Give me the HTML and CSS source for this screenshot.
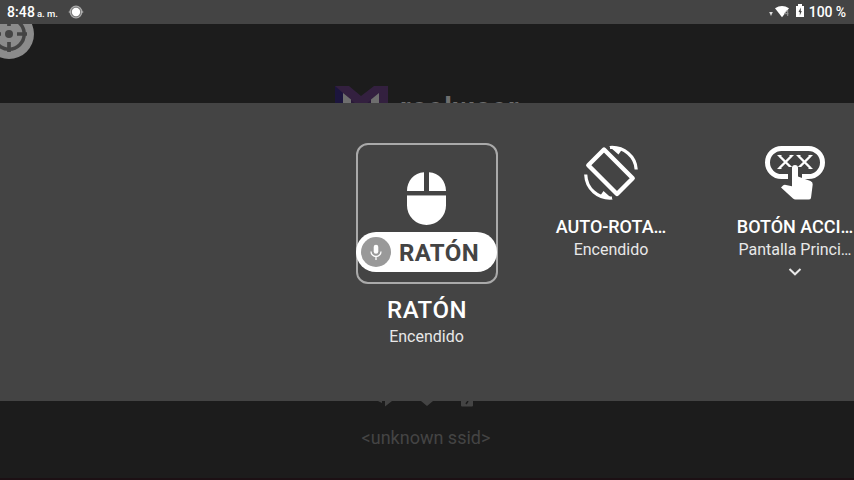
FILE: index.html
```html
<!DOCTYPE html>
<html lang="es">
<head>
<meta charset="utf-8">
<title>Controles</title>
<link rel="stylesheet" href="styles.css">
</head>
<body>
<header class="status">
  <span class="time">8:48</span><span class="ampm">a. m.</span>
  <svg class="capture" width="16" height="16" viewBox="0 0 16 16"><circle cx="8" cy="8" r="5.800" fill="#777" stroke="#aaa" stroke-width="1.300"/><path d="M0.7 8H3M13 8h2.300" stroke="#bbb" stroke-width="1.200"/><circle cx="8" cy="8" r="4.200" fill="#fff"/></svg>
  <div class="system">
    <svg width="36" height="16" viewBox="0 0 36 16"><path d="M.2 8h3.600L2 12z" fill="#ddd"/><path d="M6 4.200Q13 -.4 20 4.200L13 13.200z" fill="#fff"/><path d="M18.700 6v6M15.400 9.700h4M18.500 6l-3 3.500" fill="none" stroke="#999" stroke-width="1"/><path d="M29 0h4v2h2v11h-8V2h2z" fill="#fff"/><path d="M31.800 3.500L29.500 8h1.300v3.500l2-4.500h-1z" fill="#444"/></svg>
    <span class="percent">100 %</span>
  </div>
</header>
<section class="home-top">
  <svg class="target" width="50" height="50" viewBox="0 0 50 50"><circle cx="25" cy="25" r="25" fill="#8b8b8b"/><circle cx="25" cy="25" r="15.200" fill="none" stroke="#444" stroke-width="3.500"/><circle cx="25" cy="25" r="4" fill="#444"/><path d="M25 7v10M25 33v10M7 25h10M33 25h10" stroke="#444" stroke-width="3.700"/></svg>
  <div class="brand">
    <svg width="53" height="40" viewBox="0 0 53 40"><path d="M0 0h14l12 10L39 0h14v40H0z" fill="#33203f"/><path d="M0 0l8 7v33H0z" fill="#1c153d"/><path d="M8 7l8 6.500V40H8zM44 7l-8 6.500V40h8z" fill="#6e6e6e"/><path d="M16 14l10 8 10-8v26H16z" fill="#291938"/></svg>
    <span class="brand-name">realwear</span>
  </div>
</section>
<main class="panel">
  <article class="tile selected">
    <div class="focus">
      <svg class="mouse" width="40" height="54" viewBox="0 0 40 54"><path d="M17 .3V19H0C0 9 7 1 17 .3zM22 .3V19h17C39 9 32 1 22 .3zM0 24h39v9.500a19.500 19.500 0 0 1-39 0z" fill="#fff"/><path d="M0 23.500h39" stroke="#aaa" stroke-width="1"/></svg>
      <div class="voice">
        <span class="mic"><svg width="12" height="16" viewBox="0 0 12 16"><rect x="3.700" y=".8" width="4.600" height="9" rx="2.300" fill="#fff"/><path d="M1 7.500a5 5 0 0 0 10 0M6 12.500V16" fill="none" stroke="#fff" stroke-width="1.300"/></svg></span>
        <span class="command">RATÓN</span>
      </div>
    </div>
    <h2>RATÓN</h2>
    <p>Encendido</p>
  </article>
  <article class="tile">
    <svg class="icon" width="60" height="56" viewBox="0 0 60 56"><path d="M23 4.500L7.300 20.200 36 49 51.700 33.300z" fill="none" stroke="#fff" stroke-width="4.400" stroke-linejoin="round"/><path d="M29 2.500C43 1.500 54.500 11.500 55.200 24.500M31 53C17 54 5.300 44 4.700 29.500" fill="none" stroke="#fff" stroke-width="3.200"/><path d="M28 1.200L37.500 9.500l3.500-5zM32 54.500L22.500 46l-3.500 5z" fill="#fff"/></svg>
    <h3>AUTO-ROTA…</h3>
    <p>Encendido</p>
  </article>
  <article class="tile">
    <svg class="icon" width="60" height="56" viewBox="0 0 60 56"><rect x="2.500" y="3.500" width="55" height="28" rx="14" fill="none" stroke="#fff" stroke-width="5"/><path d="M14 10.500l13 13M27 10.500L14 23.500M33 10.500l13 13M46 10.500L33 23.500" stroke="#fff" stroke-width="2.400"/><path d="M12.500 10.500h4M24.500 10.500h4M31.500 10.500h4M43.500 10.500h4M12.500 23.500h4M43.500 23.500h4" stroke="#fff" stroke-width="1"/><path d="M25 22v13M35 22v12" stroke="#444" stroke-width="4"/><path d="M27 23a3 3 0 0 1 6 0V31.500l12.500 4.500q2.500 1 2.200 3.500L46 53q-.3 1.500-2.500 1.500H30.500q-1.500 0-2.500-1L16 42.500l2-2q1-1 3-.6l6 1.300z" fill="#fff"/></svg>
    <h3>BOTÓN ACCI…</h3>
    <p>Pantalla Princi…</p>
    <svg class="chevron" width="14" height="8" viewBox="0 0 14 8"><path d="M1.500 1l5.500 5.300L12.500 1" fill="none" stroke="#e8e8e8" stroke-width="2"/></svg>
  </article>
</main>
<section class="home-bottom">
  <svg class="indicators" width="98" height="6" viewBox="0 0 98 6"><path d="M0 0h4v2zM7 0h7L7 5.500zM43 0h12l-6 5zM83 0h12v4.500q0 1-1 1H84q-1 0-1-1z" fill="#444"/><path d="M90 0l-2 3" stroke="#1c1c1c" stroke-width="1.500"/></svg>
  <p class="ssid">&lt;unknown ssid&gt;</p>
</section>
</body>
</html>
```

FILE: styles.css
```css
* { box-sizing: border-box; margin: 0; }
body {
  width: 854px;
  height: 480px;
  display: grid;
  grid-template-rows: 24px 79px 298px 79px;
  overflow: hidden;
  background: #1c1c1c;
  color: #fff;
  font-family: Roboto, sans-serif;
}
.status {
  display: flex;
  align-items: center;
  padding: 0 8px 0 7px;
  background: #444;
  font-weight: 500;
}
.time { font-size: 14px; line-height: 24px; letter-spacing: .1px; }
.ampm { font-size: 9.5px; margin: 3px 0 0 2px; white-space: nowrap; }
.capture { margin-left: 10px; }
.system { display: flex; align-items: center; gap: 4px; margin-left: auto; }
.system svg { margin-top: -1px; }
.percent { font-size: 14px; line-height: 24px; white-space: nowrap; letter-spacing: -.1px; }
.home-top { position: relative; overflow: hidden; padding: 62px 0 0 335px; }
.target { position: absolute; left: -16px; top: -15px; }
.brand { display: flex; gap: 12px; }
.brand-name {
  margin-top: 6px;
  font: 700 29px/32px Roboto, sans-serif;
  letter-spacing: .9px;
  color: #6e6e6e;
}
.panel {
  display: flex;
  padding-left: 335px;
  overflow: hidden;
  background: #444;
}
.tile {
  flex: 0 0 184px;
  display: flex;
  flex-direction: column;
  align-items: center;
  padding-top: 42px;
  white-space: nowrap;
}
.selected { padding-top: 40px; }
.focus {
  width: 142px;
  height: 141px;
  padding-top: 27px;
  display: flex;
  flex-direction: column;
  align-items: center;
  border: 2px solid #aaa;
  border-radius: 12px;
}
.mouse { flex: none; }
.voice {
  flex: none;
  width: 141px;
  height: 40px;
  margin: 6px 1px 0 0;
  padding-left: 5px;
  display: flex;
  align-items: center;
  gap: 8px;
  border-radius: 20px;
  background: #fff;
}
.mic {
  width: 30px;
  height: 30px;
  display: grid;
  place-items: center;
  border-radius: 50%;
  background: #999;
}
.command { color: #444; font-size: 24px; line-height: 40px; font-weight: 700; letter-spacing: .4px; padding-top: 1px; }
h2 { margin-top: 12px; font-size: 24px; line-height: 28px; font-weight: 500; letter-spacing: .5px; }
h3 { margin-top: 15px; font-size: 18px; line-height: 22px; font-weight: 500; letter-spacing: -.05px; }
.tile p { font-size: 16px; line-height: 24px; color: #e8e8e8; }
.selected p { margin: 1px 1px 0 0; }
.chevron { margin-top: 6px; }
.home-bottom {
  display: flex;
  flex-direction: column;
  align-items: center;
  border-bottom: 2px solid #1c1014;
}
.ssid { margin: 20px 2px 0 0; font-size: 18px; line-height: 22px; color: #444; }
```
